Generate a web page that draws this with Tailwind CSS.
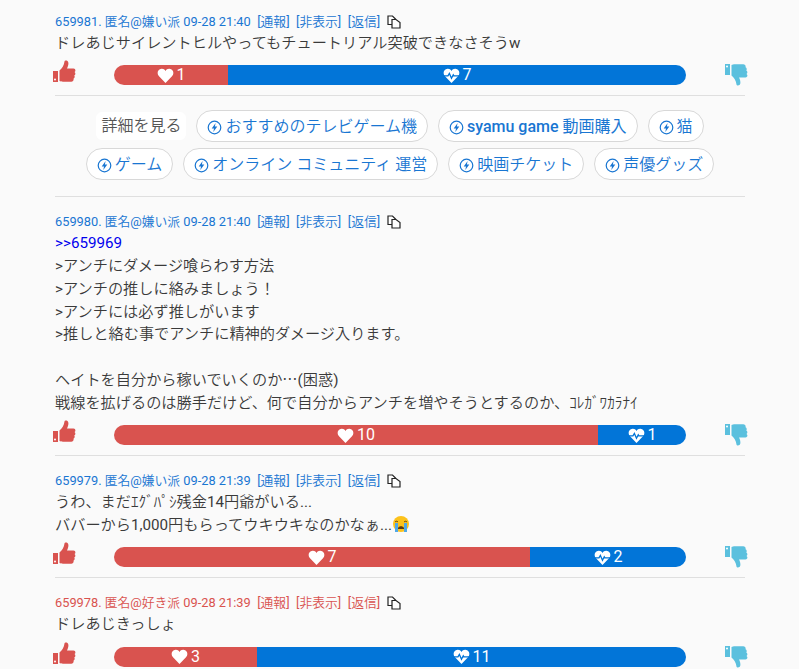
<!DOCTYPE html>
<html lang="ja">
<head>
<meta charset="utf-8">
<script src="https://cdn.jsdelivr.net/npm/@tailwindcss/browser@4"></script>
</head>
<body class="bg-[#fafafa] font-['Roboto','Noto_Sans_CJK_JP',sans-serif] font-[350] text-[15.2px] leading-[22.8px] text-[#3a3a3a] overflow-hidden h-[669px]">
<svg class="hidden">
<symbol id="up" viewBox="0 0 24 24"><path fill="#d9534f" d="M1 11h5v11H1zM7.500 21.500V10.500C10 8.500 12 5.500 12.500 1.500c.2-1.400 3.300-1.500 3.800 1 .4 2-.4 4.300-1.300 6h6.500c2 0 2.600 2.700 1 3.500 1.300.9 1.100 2.900-.3 3.500.9 1 .6 2.700-.7 3.200.5 1.500-.5 3-2.200 3H11c-1.500 0-2.500-.5-3.500-.7z"/><circle cx="3" cy="19.500" r="1" fill="#fff"/></symbol>
<symbol id="down" viewBox="0 0 24 24"><path fill="#5bc0de" d="M1 2h5v11H1zM7.500 2.500V13.500c2.500 2 4.500 5 5 9 .2 1.400 3.300 1.500 3.800-1 .4-2-.4-4.300-1.300-6h6.500c2 0 2.600-2.700 1-3.500 1.300-.9 1.100-2.900-.3-3.500.9-1 .6-2.700-.7-3.200.5-1.500-.5-3-2.200-3H11c-1.500 0-2.500.5-3.500.7z"/><circle cx="3" cy="4.500" r="1" fill="#fff"/></symbol>
<symbol id="heart" viewBox="0 0 24 24"><path fill="#fff" d="M12 22.500 2.500 12.800C-.5 9.700.6 3 6.500 2.500c2.400-.2 4.300 1 5.500 3 1.200-2 3.100-3.200 5.500-3 5.900.5 7 7.200 4 10.300z"/></symbol>
<symbol id="beat" viewBox="0 0 24 24"><path fill="#fff" d="M12 22.500 2.500 12.800C-.5 9.700.6 3 6.500 2.500c2.400-.2 4.300 1 5.500 3 1.200-2 3.100-3.200 5.500-3 5.900.5 7 7.200 4 10.300z"/><path fill="none" stroke="#0275d8" stroke-width="1.800" d="M0 12.500h7l2-3.500 3 7 2.500-5 1 1.500H24"/></symbol>
<symbol id="copy" viewBox="0 0 14 14"><path fill="#fff" stroke="#222" stroke-width="1.200" d="M1 1h4.500l3 3v5.500H1z"/><path fill="#fff" stroke="#222" stroke-width="1.200" d="M5 4.500h4l4 3v5.500H5z"/></symbol>
<symbol id="bolt" viewBox="0 0 16 16"><circle cx="8" cy="8" r="6.700" fill="none" stroke="#1976d2" stroke-width="1.300"/><path fill="#1976d2" d="M9.200 3.300 5 9h2.500l-.8 3.800L11 7H8.400z"/></symbol>
</svg>

<main class="w-[690px] ml-[55px] pt-[12px]">

<!-- 659981 -->
<article>
<header class="flex items-center gap-[6.5px] text-[12.8px] leading-[20px] text-[#1976d2]"><span><span class="font-normal">659981.</span> 匿名<span class="font-normal">@</span>嫌い派 <span class="font-normal">09-28 21:40</span></span><span><span class="font-normal">[</span>通報<span class="font-normal">]</span></span><span><span class="font-normal">[</span>非表示<span class="font-normal">]</span></span><span><span class="font-normal">[</span>返信<span class="font-normal">]</span></span><svg class="w-[14px] h-[14px]"><use href="#copy"/></svg></header>
<p>ドレあじサイレントヒルやってもチュートリアル突破できなさそう<span class="font-normal">w</span></p>
<div class="flex justify-between -mx-[3px] mt-[10.5px] mb-[10px] h-[20px]">
<svg class="w-6 h-6 -mt-[5px]"><use href="#up"/></svg>
<div class="flex w-[572px] h-[20px] rounded-full overflow-hidden font-normal text-white text-[16px] leading-[20px]">
<div class="w-[114px] bg-[#d9534f] flex items-center justify-center gap-[3px]"><svg class="w-[17px] h-[17px]"><use href="#heart"/></svg>1</div>
<div class="flex-1 bg-[#0275d8] flex items-center justify-center gap-[3px]"><svg class="w-[17px] h-[17px]"><use href="#beat"/></svg>7</div>
</div>
<svg class="w-6 h-6 -mt-[3px]"><use href="#down"/></svg>
</div>
</article>
<div class="border-t border-[#dfdfdf]"></div>

<nav class="flex flex-wrap justify-center items-center gap-x-[10px] gap-y-[6px] text-[16px] leading-[30px] text-[#1976d2] pt-[14px] pb-[16px] px-[20px]">
<span class="bg-white rounded-md px-[5px] h-[28px] leading-[28px] text-[#555]">詳細を見る</span>
<a class="flex items-center gap-[3px] h-[32px] pt-[2px] pl-[10px] pr-[10px] border border-[#d8d8d8] bg-white rounded-full"><svg class="w-[15px] h-[15px]"><use href="#bolt"/></svg>おすすめのテレビゲーム機</a>
<a class="flex items-center gap-[3px] h-[32px] pt-[2px] pl-[10px] pr-[10px] border border-[#d8d8d8] bg-white rounded-full font-medium"><svg class="w-[15px] h-[15px]"><use href="#bolt"/></svg><span class="mr-[1px]">syamu game</span><span class="font-normal">動画購入</span></a>
<a class="flex items-center gap-[3px] h-[32px] pt-[2px] pl-[10px] pr-[10px] border border-[#d8d8d8] bg-white rounded-full"><svg class="w-[15px] h-[15px]"><use href="#bolt"/></svg>猫</a>
<a class="flex items-center gap-[3px] h-[32px] pt-[2px] pl-[10px] pr-[10px] border border-[#d8d8d8] bg-white rounded-full"><svg class="w-[15px] h-[15px]"><use href="#bolt"/></svg>ゲーム</a>
<a class="flex items-center gap-[3px] h-[32px] pt-[2px] pl-[10px] pr-[10px] border border-[#d8d8d8] bg-white rounded-full"><svg class="w-[15px] h-[15px]"><use href="#bolt"/></svg>オンライン コミュニティ 運営</a>
<a class="flex items-center gap-[3px] h-[32px] pt-[2px] pl-[10px] pr-[10px] border border-[#d8d8d8] bg-white rounded-full"><svg class="w-[15px] h-[15px]"><use href="#bolt"/></svg>映画チケット</a>
<a class="flex items-center gap-[3px] h-[32px] pt-[2px] pl-[10px] pr-[10px] border border-[#d8d8d8] bg-white rounded-full"><svg class="w-[15px] h-[15px]"><use href="#bolt"/></svg>声優グッズ</a>
</nav>
<div class="border-t border-[#dfdfdf]"></div>

<!-- 659980 -->
<article class="pt-[15px]">
<header class="flex items-center gap-[6.5px] text-[12.8px] leading-[20px] text-[#1976d2]"><span><span class="font-normal">659980.</span> 匿名<span class="font-normal">@</span>嫌い派 <span class="font-normal">09-28 21:40</span></span><span><span class="font-normal">[</span>通報<span class="font-normal">]</span></span><span><span class="font-normal">[</span>非表示<span class="font-normal">]</span></span><span><span class="font-normal">[</span>返信<span class="font-normal">]</span></span><svg class="w-[14px] h-[14px]"><use href="#copy"/></svg></header>
<p><span class="font-normal text-[#0000ee]">&gt;&gt;659969</span><br><span class="font-normal">&gt;</span>アンチにダメージ喰らわす方法<br><span class="font-normal">&gt;</span>アンチの推しに絡みましょう！<br><span class="font-normal">&gt;</span>アンチには必ず推しがいます<br><span class="font-normal">&gt;</span>推しと絡む事でアンチに精神的ダメージ入ります。<br><br>ヘイトを自分から稼いでいくのか<span class="font-['Noto_Sans_CJK_JP'] leading-[0]">…</span><span class="font-normal">(</span>困惑<span class="font-normal">)</span><br>戦線を拡げるのは勝手だけど、何で自分からアンチを増やそうとするのか、ｺﾚｶﾞﾜｶﾗﾅｲ</p>
<div class="flex justify-between -mx-[3px] mt-[10.5px] mb-[10px] h-[20px]">
<svg class="w-6 h-6 -mt-[5px]"><use href="#up"/></svg>
<div class="flex w-[572px] h-[20px] rounded-full overflow-hidden font-normal text-white text-[16px] leading-[20px]">
<div class="w-[484px] bg-[#d9534f] flex items-center justify-center gap-[3px]"><svg class="w-[17px] h-[17px]"><use href="#heart"/></svg>10</div>
<div class="flex-1 bg-[#0275d8] flex items-center justify-center gap-[3px]"><svg class="w-[17px] h-[17px]"><use href="#beat"/></svg>1</div>
</div>
<svg class="w-6 h-6 -mt-[3px]"><use href="#down"/></svg>
</div>
</article>
<div class="border-t border-[#dfdfdf]"></div>

<!-- 659979 -->
<article class="pt-[15px]">
<header class="flex items-center gap-[6.5px] text-[12.8px] leading-[20px] text-[#1976d2]"><span><span class="font-normal">659979.</span> 匿名<span class="font-normal">@</span>嫌い派 <span class="font-normal">09-28 21:39</span></span><span><span class="font-normal">[</span>通報<span class="font-normal">]</span></span><span><span class="font-normal">[</span>非表示<span class="font-normal">]</span></span><span><span class="font-normal">[</span>返信<span class="font-normal">]</span></span><svg class="w-[14px] h-[14px]"><use href="#copy"/></svg></header>
<p>うわ、まだｴｸﾞﾊﾟｼ残金<span class="font-normal">14</span>円爺がいる<span class="font-normal">...</span><br>ババーから<span class="font-normal">1,000</span>円もらってウキウキなのかなぁ<span class="font-normal">...</span><svg class="inline-block w-[18px] h-[18px] align-[-3px]" viewBox="0 0 18 18"><circle cx="9" cy="9" r="8" fill="#fcc21b"/><path fill="#4fa8e8" d="M3 8h3v9H3zM12 8h3v9h-3z"/><path fill="#5a3a12" d="M6 13c1-2.500 5-2.500 6 0v1H6z"/><path stroke="#5a3a12" stroke-width="1" fill="none" d="M3 7c1-1 2-1 3 0M12 7c1-1 2-1 3 0"/></svg></p>
<div class="flex justify-between -mx-[3px] mt-[10.5px] mb-[10px] h-[20px]">
<svg class="w-6 h-6 -mt-[5px]"><use href="#up"/></svg>
<div class="flex w-[572px] h-[20px] rounded-full overflow-hidden font-normal text-white text-[16px] leading-[20px]">
<div class="w-[416px] bg-[#d9534f] flex items-center justify-center gap-[3px]"><svg class="w-[17px] h-[17px]"><use href="#heart"/></svg>7</div>
<div class="flex-1 bg-[#0275d8] flex items-center justify-center gap-[3px]"><svg class="w-[17px] h-[17px]"><use href="#beat"/></svg>2</div>
</div>
<svg class="w-6 h-6 -mt-[3px]"><use href="#down"/></svg>
</div>
</article>
<div class="border-t border-[#dfdfdf]"></div>

<!-- 659978 -->
<article class="pt-[15px]">
<header class="flex items-center gap-[6.5px] text-[12.8px] leading-[20px] text-[#d9534f]"><span><span class="font-normal">659978.</span> 匿名<span class="font-normal">@</span>好き派 <span class="font-normal">09-28 21:39</span></span><span><span class="font-normal">[</span>通報<span class="font-normal">]</span></span><span><span class="font-normal">[</span>非表示<span class="font-normal">]</span></span><span><span class="font-normal">[</span>返信<span class="font-normal">]</span></span><svg class="w-[14px] h-[14px]"><use href="#copy"/></svg></header>
<p>ドレあじきっしょ</p>
<div class="flex justify-between -mx-[3px] mt-[10.5px] mb-[10px] h-[20px]">
<svg class="w-6 h-6 -mt-[5px]"><use href="#up"/></svg>
<div class="flex w-[572px] h-[20px] rounded-full overflow-hidden font-normal text-white text-[16px] leading-[20px]">
<div class="w-[143px] bg-[#d9534f] flex items-center justify-center gap-[3px]"><svg class="w-[17px] h-[17px]"><use href="#heart"/></svg>3</div>
<div class="flex-1 bg-[#0275d8] flex items-center justify-center gap-[3px]"><svg class="w-[17px] h-[17px]"><use href="#beat"/></svg>11</div>
</div>
<svg class="w-6 h-6 -mt-[3px]"><use href="#down"/></svg>
</div>
</article>
</main>
</body>
</html>
